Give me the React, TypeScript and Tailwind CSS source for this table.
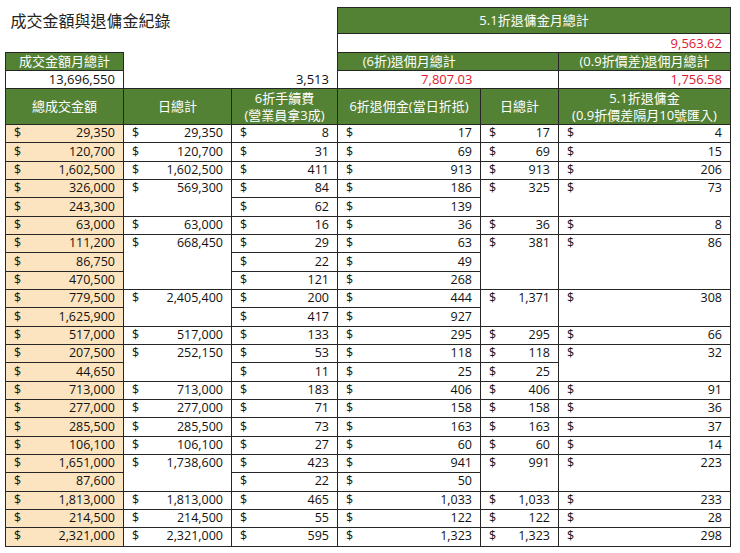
import React from "react";

type Row = [string, string, string];
type Group = { rows: Row[]; day: string; d5: string | string[]; c6: string };

const groups: Group[] = [
  { rows: [["29,350", "8", "17"]], day: "29,350", d5: "17", c6: "4" },
  { rows: [["120,700", "31", "69"]], day: "120,700", d5: "69", c6: "15" },
  { rows: [["1,602,500", "411", "913"]], day: "1,602,500", d5: "913", c6: "206" },
  { rows: [["326,000", "84", "186"], ["243,300", "62", "139"]], day: "569,300", d5: "325", c6: "73" },
  { rows: [["63,000", "16", "36"]], day: "63,000", d5: "36", c6: "8" },
  { rows: [["111,200", "29", "63"], ["86,750", "22", "49"], ["470,500", "121", "268"]], day: "668,450", d5: "381", c6: "86" },
  { rows: [["779,500", "200", "444"], ["1,625,900", "417", "927"]], day: "2,405,400", d5: "1,371", c6: "308" },
  { rows: [["517,000", "133", "295"]], day: "517,000", d5: "295", c6: "66" },
  { rows: [["207,500", "53", "118"], ["44,650", "11", "25"]], day: "252,150", d5: ["118", "25"], c6: "32" },
  { rows: [["713,000", "183", "406"]], day: "713,000", d5: "406", c6: "91" },
  { rows: [["277,000", "71", "158"]], day: "277,000", d5: "158", c6: "36" },
  { rows: [["285,500", "73", "163"]], day: "285,500", d5: "163", c6: "37" },
  { rows: [["106,100", "27", "60"]], day: "106,100", d5: "60", c6: "14" },
  { rows: [["1,651,000", "423", "941"], ["87,600", "22", "50"]], day: "1,738,600", d5: "991", c6: "223" },
  { rows: [["1,813,000", "465", "1,033"]], day: "1,813,000", d5: "1,033", c6: "233" },
  { rows: [["214,500", "55", "122"]], day: "214,500", d5: "122", c6: "28" },
  { rows: [["2,321,000", "595", "1,323"]], day: "2,321,000", d5: "1,323", c6: "298" },
];

const bd = "border border-[#262626]";
const green = "bg-[#548235] text-white";

function Money({ v }: { v: string }) {
  return (
    <div className="flex h-[17px] items-center justify-between pl-[8px] pr-[8px] leading-none">
      <span>$</span>
      <span>{v}</span>
    </div>
  );
}

export default function App() {
  return (
    <div
      className="min-h-[553px] w-[740px] bg-white pl-[5px] pt-[7px] text-[12.5px] leading-[15px] text-[#111]"
      style={{ fontFamily: '"Open Sans","Noto Sans CJK TC",sans-serif' }}
    >
      <table className="w-[725px] table-fixed border-collapse">
        <colgroup>
          <col className="w-[118px]" />
          <col className="w-[108px]" />
          <col className="w-[106px]" />
          <col className="w-[143px]" />
          <col className="w-[78px]" />
          <col className="w-[172px]" />
        </colgroup>
        <tbody>
          <tr className="h-[26px]">
            <td colSpan={3} className="p-0 pl-[5px] align-middle text-[16px] leading-[20px] text-[#222]">
              成交金額與退傭金紀錄
            </td>
            <td colSpan={3} className={`${bd} ${green} p-0 text-center text-[13px]`}>
              5.1折退傭金月總計
            </td>
          </tr>
          <tr className="h-[19px]">
            <td colSpan={3} className="p-0" />
            <td colSpan={3} className={`${bd} p-0 pr-[8px] text-right text-[13px] text-[#e01830]`}>
              9,563.62
            </td>
          </tr>
          <tr className="h-[18px]">
            <td className={`${bd} ${green} p-0 text-center text-[13px]`}>成交金額月總計</td>
            <td colSpan={2} className="p-0" />
            <td className={`border-y border-l border-[#262626] ${green} p-0 text-center text-[13px]`}>
              (6折)退佣月總計
            </td>
            <td className={`border-y border-r border-[#262626] ${green} p-0`} />
            <td className={`${bd} ${green} p-0 text-center text-[13px]`}>(0.9折價差)退佣月總計</td>
          </tr>
          <tr className="h-[18px]">
            <td className={`${bd} p-0 pr-[8px] text-right text-[13px]`}>13,696,550</td>
            <td className="p-0" />
            <td className="p-0 pr-[8px] text-right text-[13px]">3,513</td>
            <td className="border-y border-l border-[#262626] p-0 pr-[8px] text-right text-[13px] text-[#e01830]">
              7,807.03
            </td>
            <td className="border-y border-r border-[#262626] p-0" />
            <td className={`${bd} p-0 pr-[8px] text-right text-[13px] text-[#e01830]`}>1,756.58</td>
          </tr>
          <tr className="h-[36px] text-[13px] leading-[17px]">
            <td className={`${bd} ${green} p-0 text-center`}>總成交金額</td>
            <td className={`${bd} ${green} p-0 text-center`}>日總計</td>
            <td className={`${bd} ${green} p-0 text-center`}>
              <div>6折手續費</div>
              <div>(營業員拿3成)</div>
            </td>
            <td className={`${bd} ${green} p-0 text-center`}>6折退佣金(當日折抵)</td>
            <td className={`${bd} ${green} p-0 text-center`}>日總計</td>
            <td className={`${bd} ${green} p-0 text-center`}>
              <div>5.1折退傭金</div>
              <div>(0.9折價差隔月10號匯入)</div>
            </td>
          </tr>
          {groups.map((g, gi) =>
            g.rows.map((r, i) => (
              <tr key={`${gi}-${i}`} className="h-[18.33px]">
                <td className={`${bd} bg-[#fbe4bf] p-0 align-top`}>
                  <Money v={r[0]} />
                </td>
                {i === 0 && (
                  <td rowSpan={g.rows.length} className={`${bd} p-0 align-top`}>
                    <Money v={g.day} />
                  </td>
                )}
                <td className={`${bd} p-0 align-top`}>
                  <Money v={r[1]} />
                </td>
                <td className={`${bd} p-0 align-top`}>
                  <Money v={r[2]} />
                </td>
                {Array.isArray(g.d5) ? (
                  <td className={`${bd} p-0 align-top`}>
                    <Money v={g.d5[i]} />
                  </td>
                ) : (
                  i === 0 && (
                    <td rowSpan={g.rows.length} className={`${bd} p-0 align-top`}>
                      <Money v={g.d5} />
                    </td>
                  )
                )}
                {i === 0 && (
                  <td rowSpan={g.rows.length} className={`${bd} p-0 align-top`}>
                    <Money v={g.c6} />
                  </td>
                )}
              </tr>
            ))
          )}
        </tbody>
      </table>
    </div>
  );
}
